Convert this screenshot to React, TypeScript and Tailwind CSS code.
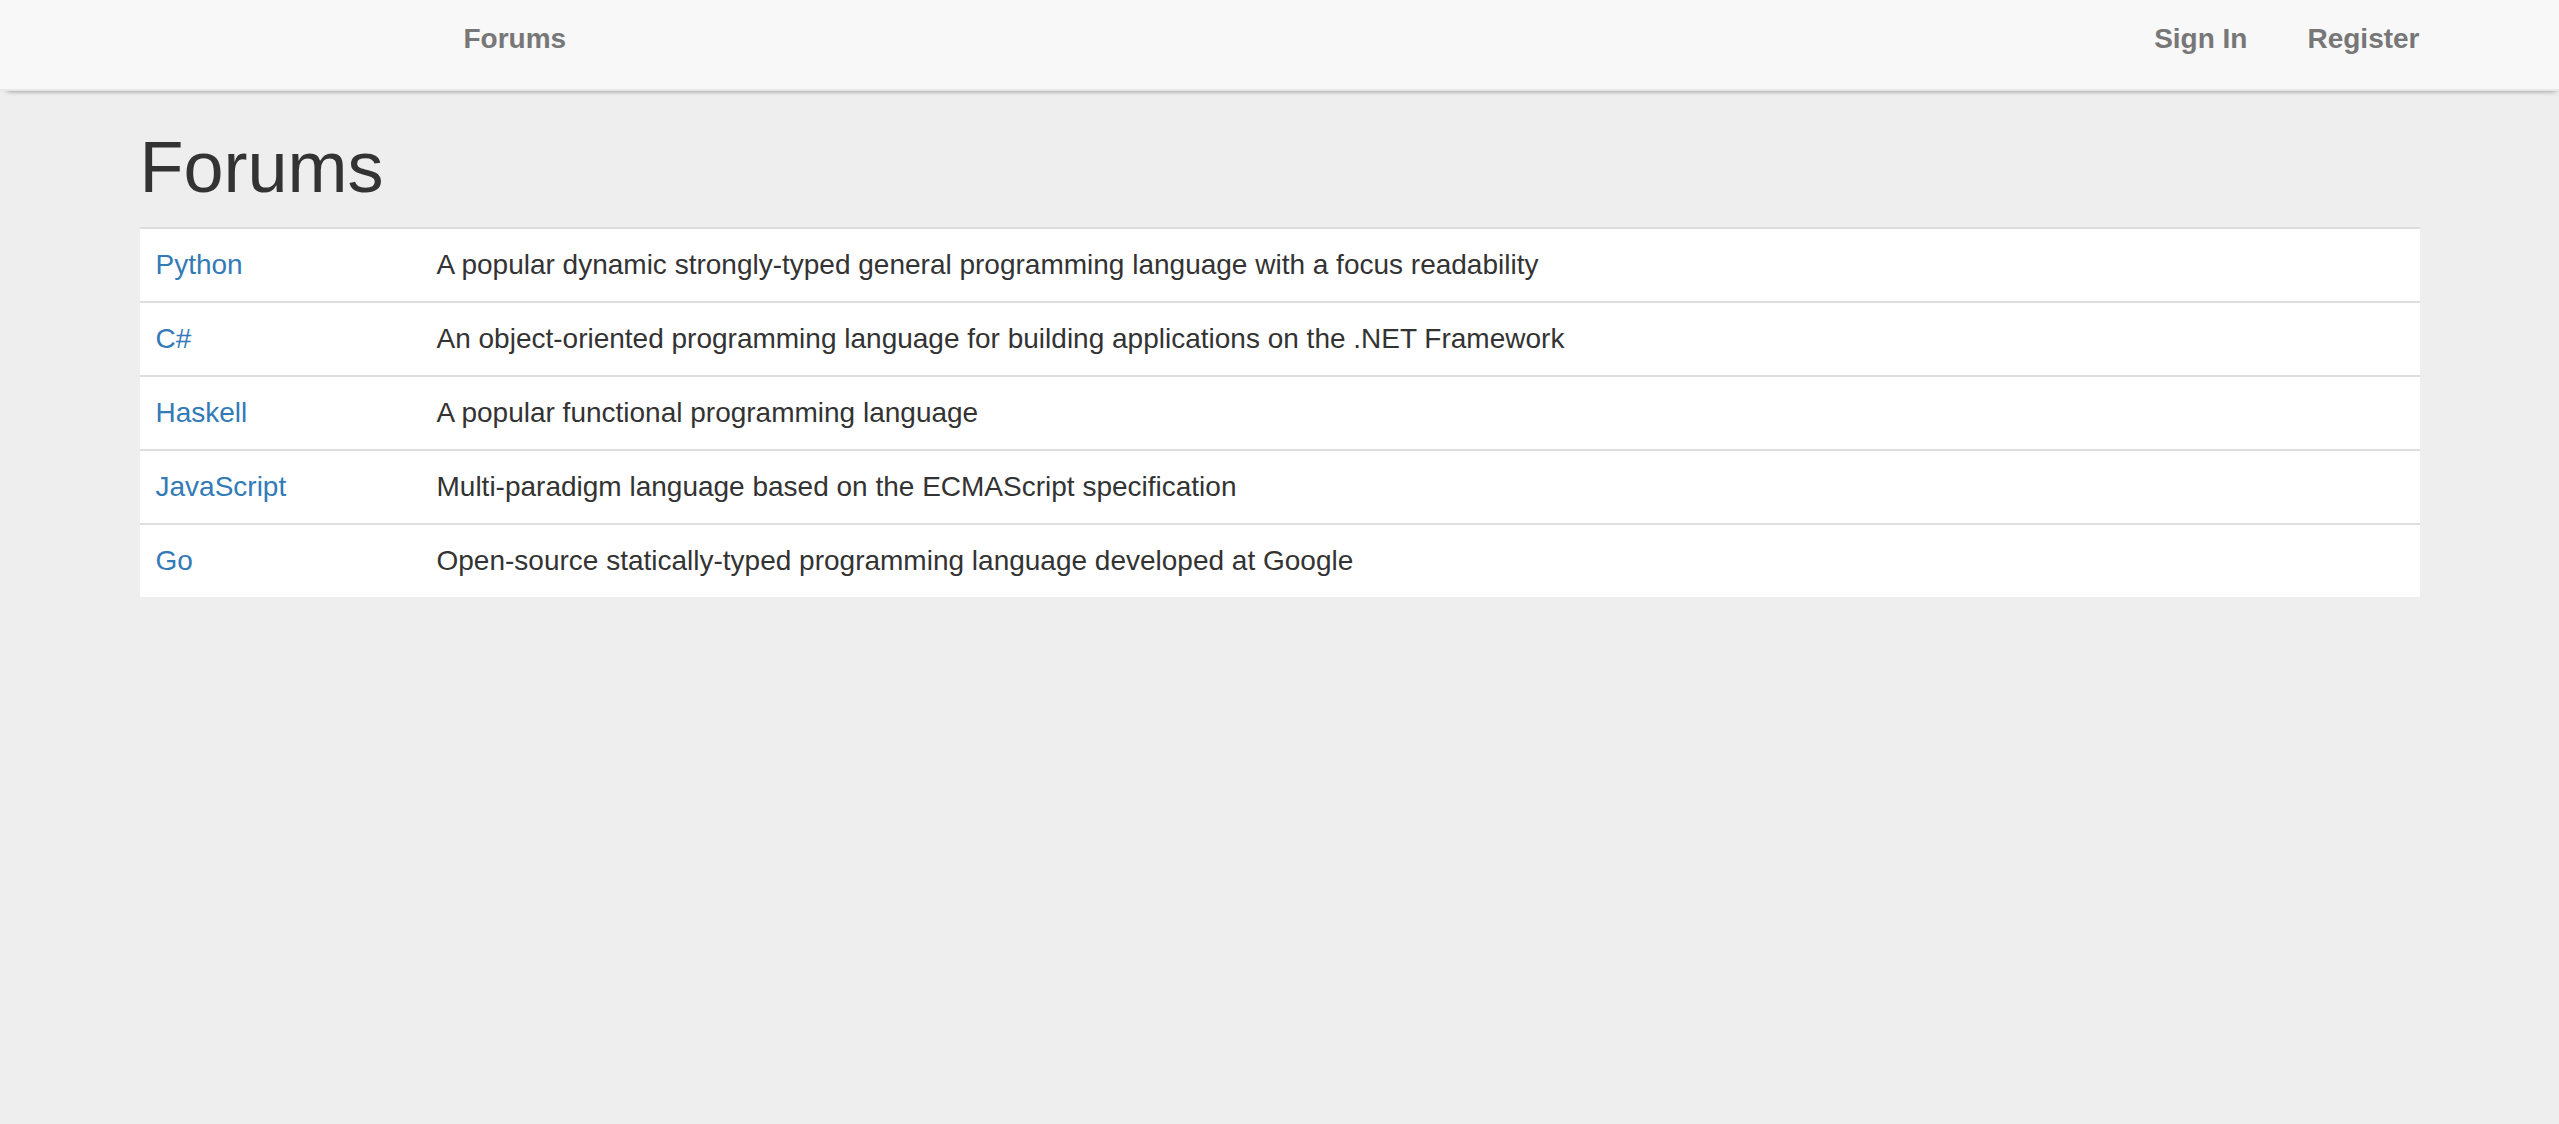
const forums = [
  {
    name: "Python",
    description:
      "A popular dynamic strongly-typed general programming language with a focus readability",
  },
  {
    name: "C#",
    description:
      "An object-oriented programming language for building applications on the .NET Framework",
  },
  { name: "Haskell", description: "A popular functional programming language" },
  {
    name: "JavaScript",
    description: "Multi-paradigm language based on the ECMAScript specification",
  },
  {
    name: "Go",
    description: "Open-source statically-typed programming language developed at Google",
  },
];

export default function App() {
  return (
    <div className="min-h-[1124px] bg-[#eeeeee] font-['Liberation_Sans',Arial,sans-serif] text-[28px] text-[#333333]">
      <nav className="h-[91px] border-b-2 border-[#e7e7e7] bg-[#f8f8f8] shadow-[2px_5px_5px_-5px_rgba(0,0,0,0.45)]">
        <div className="mx-auto flex w-[2340px] px-[30px]">
          <ul className="ml-[294px] flex">
            <li>
              <a className="block px-[30px] pt-[19px] font-bold leading-[40px] text-[#777777]">
                Forums
              </a>
            </li>
          </ul>
          <ul className="-mr-[30px] ml-auto flex">
            <li>
              <a className="block px-[30px] pt-[19px] font-bold leading-[40px] text-[#777777]">
                Sign In
              </a>
            </li>
            <li>
              <a className="block px-[30px] pt-[19px] font-bold leading-[40px] text-[#777777]">
                Register
              </a>
            </li>
          </ul>
        </div>
      </nav>

      <main className="mx-auto w-[2340px] px-[30px]">
        <h1 className="mb-[20px] mt-[37px] text-[72px] font-normal leading-[1.1]">Forums</h1>
        <table className="w-full border-collapse bg-white">
          <tbody>
            {forums.map((forum) => (
              <tr key={forum.name} className="border-t-2 border-[#dddddd]">
                <td className="w-[281px] px-[16px] py-[16px] align-top leading-[40px]">
                  <a className="text-[#337ab7]">{forum.name}</a>
                </td>
                <td className="px-[16px] py-[16px] align-top leading-[40px]">
                  {forum.description}
                </td>
              </tr>
            ))}
          </tbody>
        </table>
      </main>
    </div>
  );
}
